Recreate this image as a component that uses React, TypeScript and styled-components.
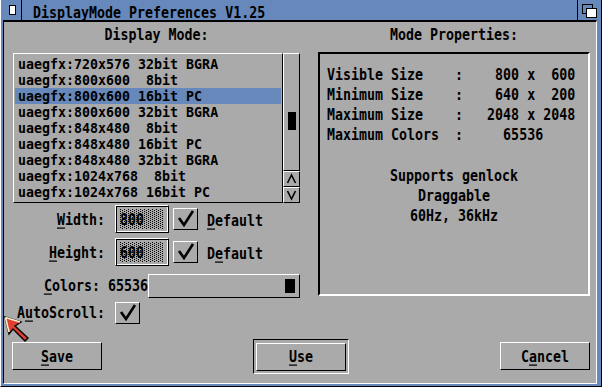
import React from "react";
import styled, { createGlobalStyle } from "styled-components";

const GRAY = "#aaaaaa";
const BLUE = "#6688bb";

const Global = createGlobalStyle`
  html, body { margin: 0; padding: 0; background: ${GRAY}; }
  body { width: 602px; height: 387px; overflow: hidden; font-family: "DejaVu Sans Mono", "Liberation Mono", monospace; }
  * { box-sizing: border-box; }
`;

const Window = styled.div`
  position: relative;
  width: 602px;
  height: 387px;
  background: ${BLUE};
  border-left: 1px solid #fff;
  border-right: 1px solid #000;
  border-bottom: 1px solid #000;
  display: flex;
  flex-direction: column;
`;

const Txt = styled.span<{ $s?: number }>`
  display: inline-block;
  font-family: "DejaVu Sans Mono", "Liberation Mono", monospace;
  font-weight: bold;
  font-size: 13.3px;
  line-height: 13px;
  height: 13px;
  margin: 1.5px 0;
  white-space: pre;
  color: #000;
  transform: scaleY(${(p) => p.$s ?? 1.23});
`;

const Key = styled.span`
  text-decoration: underline;
  text-decoration-thickness: 1px;
  text-underline-offset: 2px;
`;

const TitleBar = styled.div`
  height: 20px;
  display: flex;
  align-items: stretch;
  flex-shrink: 0;
`;

const CloseGadget = styled.div`
  width: 21px;
  border-right: 1px solid #000;
  display: flex;
  align-items: center;
  justify-content: center;
  padding-left: 3px;
`;

const CloseBox = styled.div`
  width: 7px;
  height: 10px;
  background: #fff;
  border: 1px solid #000;
`;

const Title = styled.div`
  flex: 1;
  padding: 2px 0 0 11px;
`;

const DepthGadget = styled.div`
  width: 20px;
  margin-right: 4px;
  border-left: 1px solid #000;
  display: flex;
`;

const Body = styled.div`
  flex: 1;
  margin: 0 4px 2px 2px;
  background: ${GRAY};
  border-top: 2px solid #000;
  border-left: 1px solid #000;
  border-right: 1px solid #fff;
  border-bottom: 1px solid #fff;
  display: flex;
  flex-direction: column;
  padding: 0 6px 0 8px;
`;

const Main = styled.div`
  display: flex;
  gap: 18px;
  padding-left: 1px;
`;

const Column = styled.div<{ $w: number }>`
  width: ${(p) => p.$w}px;
  display: flex;
  flex-direction: column;
`;

const Header = styled.div`
  height: 30px;
  padding-top: 4px;
  display: flex;
  justify-content: center;
  align-items: flex-start;
`;

const ListArea = styled.div`
  margin-top: 1px;
  height: 150px;
  display: flex;
`;

const ListBox = styled.div`
  width: 270px;
  border-top: 1px solid #fff;
  border-left: 1px solid #fff;
  border-right: 1px solid #000;
  border-bottom: 1px solid #000;
  padding: 2px 1px 1px 1px;
  display: flex;
  flex-direction: column;
`;

const ListRow = styled.div<{ $sel?: boolean }>`
  height: 16px;
  padding-left: 3px;
  display: flex;
  align-items: flex-start;
  background: ${(p) => (p.$sel ? BLUE : "transparent")};
`;

const Scroller = styled.div`
  width: 17px;
  display: flex;
  flex-direction: column;
`;

const Bevel = styled.div`
  border-top: 1px solid #fff;
  border-left: 1px solid #fff;
  border-right: 1px solid #000;
  border-bottom: 1px solid #000;
`;

const Track = styled(Bevel)`
  flex: 1;
  padding-left: 4px;
`;

const Knob = styled.div<{ $top: number; $h: number }>`
  width: 8px;
  height: ${(p) => p.$h}px;
  margin-top: ${(p) => p.$top}px;
  background: #000;
`;

const ArrowBtn = styled(Bevel)`
  height: 16px;
  display: flex;
  align-items: center;
  justify-content: center;
`;

const FormRow = styled.div<{ $h: number; $mt: number }>`
  height: ${(p) => p.$h}px;
  margin-top: ${(p) => p.$mt}px;
  display: flex;
  align-items: center;
`;

const Label = styled.div<{ $w: number }>`
  width: ${(p) => p.$w}px;
  display: flex;
  justify-content: flex-end;
  flex-shrink: 0;
`;

const StringBox = styled(Bevel)`
  width: 54px;
  height: 28px;
  margin-left: 10px;
  padding: 3px 4px;
  box-shadow: inset 1px 1px 0 #000, inset -1px -1px 0 #fff;
`;

const Field = styled.div`
  height: 20px;
  display: flex;
  align-items: center;
  background-color: ${GRAY};
  background-image: conic-gradient(from 270deg at 1px 1px, #000 0 25%, transparent 0),
    conic-gradient(from 270deg at 1px 1px, #000 0 25%, transparent 0);
  background-size: 4px 2px, 4px 2px;
  background-position: 0 0, 2px 1px;
`;

const Check = styled(Bevel)<{ $ml: number }>`
  width: 25px;
  height: 22px;
  margin-left: ${(p) => p.$ml}px;
  display: flex;
  align-items: center;
  justify-content: center;
`;

const After = styled.div`
  margin-left: 9px;
`;

const Slider = styled(Bevel)`
  width: 153px;
  height: 24px;
  padding: 4px;
  display: flex;
  justify-content: flex-end;
`;

const SliderKnob = styled.div`
  width: 10px;
  height: 14px;
  background: #000;
`;

const Panel = styled.div`
  height: 244px;
  border-top: 2px solid #000;
  border-left: 2px solid #000;
  border-right: 2px solid #fff;
  border-bottom: 2px solid #fff;
  padding: 10px 0 0 7px;
  display: flex;
  flex-direction: column;
`;

const PanelLine = styled.div<{ $center?: boolean }>`
  height: 20px;
  padding-top: 2px;
  display: flex;
  align-items: flex-start;
  justify-content: ${(p) => (p.$center ? "center" : "flex-start")};
  padding-right: ${(p) => (p.$center ? "7px" : "0")};
`;

const Spacer = styled.div<{ $h: number }>`
  height: ${(p) => p.$h}px;
`;

const ButtonRow = styled.div`
  margin-top: auto;
  margin-bottom: 9px;
  height: 36px;
  display: flex;
  align-items: center;
  justify-content: space-between;
`;

const Button = styled(Bevel)`
  width: 90px;
  height: 28px;
  display: flex;
  align-items: center;
  justify-content: center;
`;

const DefaultFrame = styled.div`
  border-top: 1px solid #000;
  border-left: 1px solid #000;
  border-right: 1px solid #fff;
  border-bottom: 1px solid #fff;
  padding: 3px 2px 2px 2px;
`;

const Pointer = styled.svg`
  position: absolute;
  left: 3px;
  top: 316px;
`;

const modes = [
  "uaegfx:720x576 32bit BGRA",
  "uaegfx:800x600  8bit",
  "uaegfx:800x600 16bit PC",
  "uaegfx:800x600 32bit BGRA",
  "uaegfx:848x480  8bit",
  "uaegfx:848x480 16bit PC",
  "uaegfx:848x480 32bit BGRA",
  "uaegfx:1024x768  8bit",
  "uaegfx:1024x768 16bit PC",
];

const props = [
  "Visible Size    :    800 x  600",
  "Minimum Size    :    640 x  200",
  "Maximum Size    :   2048 x 2048",
  "Maximum Colors  :     65536",
];

const CheckMark = () => (
  <svg width="23" height="20" viewBox="0 0 23 20">
    <polyline points="5,9 10,16 19,2" fill="none" stroke="#000" strokeWidth="2.6" />
  </svg>
);

const Chevron = ({ up }: { up?: boolean }) => (
  <svg width="15" height="14" viewBox="0 0 15 14">
    <polyline
      points={up ? "3.5,11 7.5,3 11.5,11" : "3.5,3 7.5,11 11.5,3"}
      fill="none"
      stroke="#000"
      strokeWidth="1.6"
    />
  </svg>
);

export default function App() {
  const selected = 2;
  return (
    <>
      <Global />
      <Window>
        <TitleBar>
          <CloseGadget>
            <CloseBox />
          </CloseGadget>
          <Title>
            <Txt>DisplayMode Preferences V1.25</Txt>
          </Title>
          <DepthGadget>
            <svg width="19" height="20" viewBox="0 0 19 20">
              <rect x="4.5" y="4.5" width="10" height="9" fill={BLUE} stroke="#000" />
              <rect x="8.5" y="8.5" width="10" height="9" fill="#fff" stroke="#000" />
            </svg>
          </DepthGadget>
        </TitleBar>
        <Body>
          <Main>
            <Column $w={287}>
              <Header>
                <Txt>Display Mode:</Txt>
              </Header>
              <ListArea>
                <ListBox>
                  {modes.map((m, i) => (
                    <ListRow key={m} $sel={i === selected}>
                      <Txt $s={1.03}>{m}</Txt>
                    </ListRow>
                  ))}
                </ListBox>
                <Scroller>
                  <Track>
                    <Knob $top={58} $h={18} />
                  </Track>
                  <ArrowBtn>
                    <Chevron up />
                  </ArrowBtn>
                  <ArrowBtn>
                    <Chevron />
                  </ArrowBtn>
                </Scroller>
              </ListArea>

              <FormRow $h={28} $mt={2}>
                <Label $w={92}>
                  <Txt>
                    <Key>W</Key>idth:
                  </Txt>
                </Label>
                <StringBox>
                  <Field>
                    <Txt>800</Txt>
                  </Field>
                </StringBox>
                <Check $ml={4}>
                  <CheckMark />
                </Check>
                <After>
                  <Txt>
                    <Key>D</Key>efault
                  </Txt>
                </After>
              </FormRow>

              <FormRow $h={28} $mt={5}>
                <Label $w={92}>
                  <Txt>
                    <Key>H</Key>eight:
                  </Txt>
                </Label>
                <StringBox>
                  <Field>
                    <Txt>600</Txt>
                  </Field>
                </StringBox>
                <Check $ml={4}>
                  <CheckMark />
                </Check>
                <After>
                  <Txt>
                    D<Key>e</Key>fault
                  </Txt>
                </After>
              </FormRow>

              <FormRow $h={27} $mt={6}>
                <Label $w={135}>
                  <Txt>
                    <Key>C</Key>olors: 65536
                  </Txt>
                </Label>
                <Slider>
                  <SliderKnob />
                </Slider>
              </FormRow>

              <FormRow $h={27} $mt={0}>
                <Label $w={92}>
                  <Txt>
                    A<Key>u</Key>toScroll:
                  </Txt>
                </Label>
                <Check $ml={10}>
                  <CheckMark />
                </Check>
              </FormRow>
            </Column>

            <Column $w={272}>
              <Header>
                <Txt>Mode Properties:</Txt>
              </Header>
              <Panel>
                {props.map((p) => (
                  <PanelLine key={p}>
                    <Txt>{p}</Txt>
                  </PanelLine>
                ))}
                <Spacer $h={21} />
                <PanelLine $center>
                  <Txt>Supports genlock</Txt>
                </PanelLine>
                <PanelLine $center>
                  <Txt>Draggable</Txt>
                </PanelLine>
                <PanelLine $center>
                  <Txt>60Hz, 36kHz</Txt>
                </PanelLine>
              </Panel>
            </Column>
          </Main>

          <ButtonRow>
            <Button>
              <Txt>
                <Key>S</Key>ave
              </Txt>
            </Button>
            <DefaultFrame>
              <Button>
                <Txt>
                  <Key>U</Key>se
                </Txt>
              </Button>
            </DefaultFrame>
            <Button>
              <Txt>
                C<Key>a</Key>ncel
              </Txt>
            </Button>
          </ButtonRow>
        </Body>
        <Pointer width="27" height="27" viewBox="0 0 27 27">
          <polygon points="1,1 17,6 11,10 24,22 21,25 9,13 5,18" fill="#e04030" stroke="#000" strokeWidth="1.4" />
          <polyline points="1.5,1.5 16,6" fill="none" stroke="#ffeecc" strokeWidth="1.8" />
          <polyline points="1.5,1.5 5,16" fill="none" stroke="#ffeecc" strokeWidth="1.6" />
        </Pointer>
      </Window>
    </>
  );
}
